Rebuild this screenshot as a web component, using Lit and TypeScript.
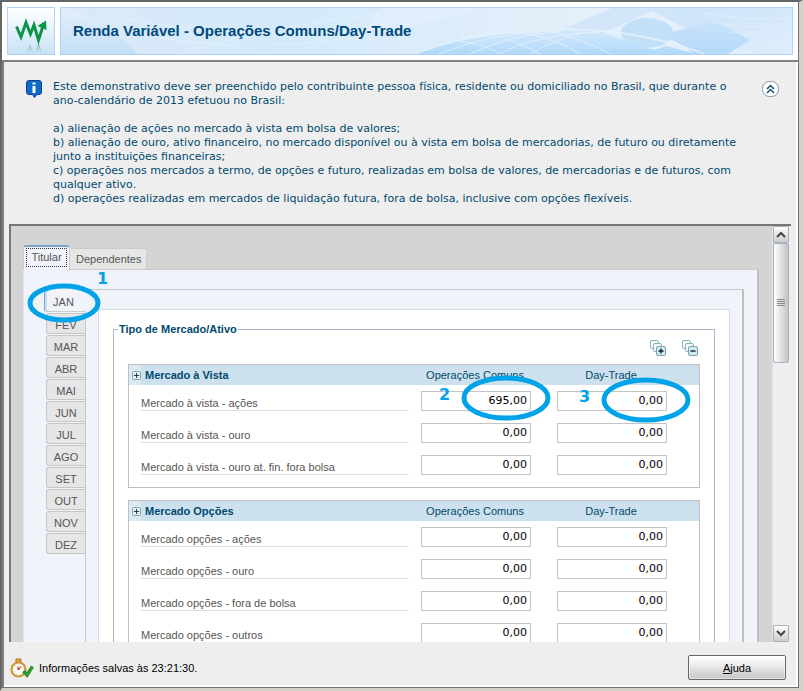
import { LitElement, html, css, svg, nothing } from "lit";
import { customElement, property } from "lit/decorators.js";
import { classMap } from "lit/directives/class-map.js";

interface Row {
  label: string;
  comuns: string;
  day: string;
  marked?: boolean;
}

const MONTHS = ["JAN", "FEV", "MAR", "ABR", "MAI", "JUN", "JUL", "AGO", "SET", "OUT", "NOV", "DEZ"];

const VISTA: Row[] = [
  { label: "Mercado à vista - ações", comuns: "695,00", day: "0,00", marked: true },
  { label: "Mercado à vista - ouro", comuns: "0,00", day: "0,00" },
  { label: "Mercado à vista - ouro at. fin. fora bolsa", comuns: "0,00", day: "0,00" },
];

const OPCOES: Row[] = [
  { label: "Mercado opções - ações", comuns: "0,00", day: "0,00" },
  { label: "Mercado opções - ouro", comuns: "0,00", day: "0,00" },
  { label: "Mercado opções - fora de bolsa", comuns: "0,00", day: "0,00" },
  { label: "Mercado opções - outros", comuns: "0,00", day: "0,00" },
];

/* Hand-drawn ring with a step number, laid over the field it points at. */
@customElement("step-mark")
export class StepMark extends LitElement {
  @property() step = "";
  @property() size: "small" | "large" = "large";

  static styles = css`
    :host {
      display: block;
      position: absolute;
      pointer-events: none;
      color: #00a2e8;
    }
    .ring {
      display: block;
    }
    .num {
      position: absolute;
      font: bold 16px/16px "DejaVu Sans", sans-serif;
    }
    .num.large {
      left: -22px;
      top: 12px;
    }
    .num.small {
      left: 70px;
      top: -12px;
    }
  `;

  render() {
    const w = this.size === "small" ? 74 : 90;
    const h = this.size === "small" ? 40 : 46;
    return html`
      <svg class="ring" width=${w} height=${h} viewBox="0 0 ${w} ${h}">
        <ellipse cx=${w / 2} cy=${h / 2} rx=${w / 2 - 3} ry=${h / 2 - 3}
          fill="none" stroke="currentColor" stroke-width="5" />
      </svg>
      <span class="num ${this.size}">${this.step}</span>
    `;
  }
}

@customElement("asset-table")
export class AssetTable extends LitElement {
  @property() heading = "";
  @property({ attribute: false }) rows: Row[] = [];

  static styles = css`
    :host {
      display: block;
      border: 1px solid #bfbfbf;
      padding-bottom: 6px;
    }
    .grid {
      width: 100%;
      table-layout: fixed;
      border-collapse: collapse;
    }
    .amount {
      width: 136px;
    }
    .last {
      width: 142px;
    }
    th,
    td {
      padding: 0;
    }
    .head th {
      height: 20px;
      background: #cde0ee;
      color: #004a6e;
      font-weight: normal;
    }
    .head .title {
      font-weight: bold;
      text-align: left;
    }
    .bar {
      display: flex;
      align-items: center;
      gap: 4px;
    }
    .toggle {
      display: flex;
      align-items: center;
      justify-content: center;
      width: 12px;
      height: 20px;
      padding: 0 0 0 3px;
      box-sizing: border-box;
      border: 0;
      background: #d9e9f6;
    }
    .colname {
      display: block;
      width: 108px;
    }
    .cell {
      height: 32px;
      vertical-align: top;
    }
    .name {
      display: block;
      margin: 9px 12px 0;
      height: 16px;
      line-height: 18px;
      border-bottom: 1px solid #dedede;
      color: #555;
      text-align: left;
      font-weight: normal;
    }
    .holder {
      position: relative;
      width: 110px;
      padding-top: 6px;
    }
    .value {
      display: block;
      box-sizing: border-box;
      width: 110px;
      height: 20px;
      margin: 0;
      padding: 0 3px 1px;
      border: 1px solid #c4c4c4;
      background: #fff;
      color: #000;
      text-align: right;
      font: 11px "DejaVu Sans", Verdana, sans-serif;
      outline: none;
    }
    .m2 {
      left: 40px;
      top: -10px;
    }
    .m3 {
      left: 44px;
      top: -8px;
    }
  `;

  render() {
    return html`
      <table class="grid">
        <colgroup>
          <col />
          <col class="amount" />
          <col class="last" />
        </colgroup>
        <thead>
          <tr class="head">
            <th class="title" scope="col">
              <div class="bar">
                <button class="toggle" aria-label="Expandir ${this.heading}">
                  <svg width="9" height="9" viewBox="0 0 9 9">
                    <rect x="0.5" y="0.5" width="8" height="8" rx="1" fill="#e4eff5" stroke="#8ba3ad" />
                    <path d="M2 4.5H7M4.5 2V7" stroke="#25404c" />
                  </svg>
                </button>
                ${this.heading}
              </div>
            </th>
            <th scope="col"><span class="colname">Operações Comuns</span></th>
            <th scope="col"><span class="colname">Day-Trade</span></th>
          </tr>
        </thead>
        <tbody>
          ${this.rows.map(
            (r) => html`
              <tr>
                <th class="cell" scope="row"><span class="name">${r.label}</span></th>
                <td class="cell">
                  <div class="holder">
                    <input class="value" aria-label="${r.label}, Operações Comuns" .value=${r.comuns} />
                    ${r.marked ? html`<step-mark class="m2" step="2"></step-mark>` : nothing}
                  </div>
                </td>
                <td class="cell">
                  <div class="holder">
                    <input class="value" aria-label="${r.label}, Day-Trade" .value=${r.day} />
                    ${r.marked ? html`<step-mark class="m3" step="3"></step-mark>` : nothing}
                  </div>
                </td>
              </tr>
            `
          )}
        </tbody>
      </table>
    `;
  }
}

const stackIcon = (minus: boolean) => svg`
  <g fill="#f4fafb" stroke="#8fb0b5">
    <rect x="0.5" y="0.5" width="8" height="8" rx="1.5" />
    <rect x="3.5" y="3.5" width="8" height="8" rx="1.5" />
  </g>
  <rect x="6.5" y="6.5" width="9" height="9" rx="1.5" fill="#cfe9ee" stroke="#7fa3aa" />
  <path d=${minus ? "M8.500 11H13.500" : "M8.500 11H13.500M11 8.500V13.500"} stroke="#123" stroke-width="1.4" />
`;

@customElement("app-root")
export class AppRoot extends LitElement {
  static styles = css`
    :host {
      display: block;
      font: 11px/14px "Liberation Sans", Arial, sans-serif;
      color: #000;
    }
    .window {
      display: flex;
      flex-direction: column;
      box-sizing: border-box;
      height: 100vh;
      background: #eee;
      border: solid;
      border-width: 2px 4px 3px 2px;
      border-color: #666 #d4d0c8 #d4d0c8 #666;
      overflow: hidden;
    }
    .header {
      display: flex;
      gap: 5px;
      padding: 5px;
      background: #fff;
      border-right: 1px solid #707078;
    }
    .logo {
      box-sizing: border-box;
      width: 48px;
      height: 48px;
      border: 1px solid #b0d2f3;
      background: linear-gradient(#fff, #c9e2f8);
      flex: none;
    }
    .banner {
      position: relative;
      flex: 1;
      box-sizing: border-box;
      height: 48px;
      border: 1px solid #b0d2f3;
      background: #d5e9fa;
      overflow: hidden;
      display: flex;
      align-items: center;
    }
    .art {
      position: absolute;
      right: 0;
      top: 0;
      width: 100%;
      height: 46px;
    }
    .title {
      position: relative;
      margin: 0 0 0 12px;
      font-size: 15px;
      line-height: 20px;
      color: #004a7c;
    }
    .body {
      flex: 1;
      min-height: 0;
      display: flex;
      flex-direction: column;
      border: solid;
      border-width: 2px 1px 1px 2px;
      border-color: #808084 #707078 #707078 #808080;
      box-shadow: inset -2px -2px #fff;
      padding: 0 7px 0 5px;
    }
    .intro {
      display: flex;
      align-items: flex-start;
      padding: 18px 12px 18px 17px;
      color: #004a6e;
      font-family: "DejaVu Sans", Verdana, sans-serif;
    }
    .info {
      flex: none;
    }
    .copy {
      flex: 1;
      margin: 0 0 0 11px;
    }
    .copy p {
      margin: 0 0 14px;
    }
    .copy p:last-child {
      margin: 0;
    }
    .collapse {
      flex: none;
      margin-top: 1px;
      padding: 0;
      border: 0;
      background: none;
      height: 17px;
    }
    .pane {
      flex: 1;
      min-height: 0;
      display: flex;
      overflow: hidden;
      background: #d4d4d4;
      border: solid #787878;
      border-width: 2px 0 0 2px;
    }
    .canvas {
      flex: 1;
      padding: 19px 14px 0 12px;
    }
    .tabs {
      display: flex;
      align-items: flex-end;
    }
    .tab {
      font: inherit;
      color: #555;
      box-sizing: border-box;
      height: 21px;
      padding: 0 5px;
      border: 1px solid #ccc;
      border-bottom: 0;
      border-left-color: #e6e6e6;
      background: #e6e6e6;
    }
    .tab.on {
      position: relative;
      height: 25px;
      width: 47px;
      margin-bottom: -1px;
      padding: 0 0 4px;
      border: 1px solid #c8ccd0;
      border-top: 2px solid #7ba6c8;
      border-bottom: 0;
      border-radius: 3px 3px 0 0;
      background: #f0f4fa;
      outline: 1px dotted #333;
      outline-offset: -4px;
    }
    .outer {
      border: 1px solid #ccc;
      border-right: 2px solid #c0c0c0;
      border-left-color: #e0e6ee;
      background: #f0f4fa;
      padding: 19px 13px 0 20px;
      display: flex;
      align-items: flex-start;
      height: 700px;
    }
    .months {
      flex: none;
      width: 41px;
      display: flex;
      flex-direction: column;
      align-items: flex-end;
      gap: 1px;
      padding-top: 2px;
    }
    .month {
      font: inherit;
      color: #555;
      box-sizing: border-box;
      width: 39px;
      height: 21px;
      padding: 2px 0 0;
      border: 1px solid #c6c6c6;
      border-right: 0;
      border-radius: 3px 0 0 3px;
      background: #e6e6e6;
    }
    .month.on {
      width: 42px;
      padding-right: 4px;
      margin-right: -1px;
      border-color: #ccc #ccc #ccc #7ba6c8;
      border-top: 0;
      box-shadow: inset 2px 0 #c3ddf2;
      background: #f0f4fa;
    }
    .jan {
      position: relative;
      z-index: 1;
    }
    .jan step-mark {
      left: -17px;
      top: -8px;
    }
    .inner {
      flex: 1;
      border: 1px solid #c4c8cc;
      border-right: 2px solid #c0c0c0;
      padding: 19px 12px 0;
      height: 680px;
    }
    .sheet {
      border: 1px solid #d0dae4;
      background: #fff;
      padding: 12px 14px 0;
      height: 660px;
    }
    .group {
      margin: 0;
      min-width: 0;
      padding: 4px 14px 12px;
      border: 1px solid #a9b6c4;
    }
    .group legend {
      margin-left: -10px;
      padding: 0 1px;
      font-weight: bold;
      color: #004a6e;
    }
    .tools {
      display: flex;
      justify-content: flex-end;
      gap: 16px;
      padding-right: 2px;
      height: 24px;
    }
    .tool {
      width: 16px;
      height: 16px;
      padding: 0;
      border: 0;
      background: none;
    }
    .tables {
      display: grid;
      gap: 12px;
    }
    .scroll {
      flex: none;
      width: 16px;
      margin-right: 2px;
      display: flex;
      flex-direction: column;
      background: #eee;
      box-shadow: 2px 0 #eee, -1px 0 #e4e4e4;
    }
    .arrow {
      flex: none;
      box-sizing: border-box;
      width: 16px;
      height: 17px;
      padding: 0;
      border: 1px solid #a8b0c0;
      border-radius: 1px;
      background: linear-gradient(#fff, #ccc);
      display: flex;
      align-items: center;
      justify-content: center;
    }
    .track {
      flex: 1;
    }
    .thumb {
      box-sizing: border-box;
      height: 120px;
      border: 1px solid #a8b0c8;
      border-radius: 2px;
      background: linear-gradient(90deg, #fff, #c4c4c4);
      display: flex;
      align-items: center;
      justify-content: center;
    }
    .footer {
      display: flex;
      align-items: center;
      box-sizing: border-box;
      height: 45px;
      padding: 6px 5px 0 1px;
    }
    .status {
      flex: 1;
      margin-left: 4px;
    }
    .help {
      font: inherit;
      width: 98px;
      height: 25px;
      padding: 0;
      border: 1px solid #666;
      border-radius: 2px;
      box-shadow: inset 0 0 0 1px #fff8;
      background: linear-gradient(#fff, #f2f2f2 30%, #c6c6c6);
    }
  `;

  render() {
    return html`
      <div class="window">
        <header class="header">
          <div class="logo">
            <svg width="46" height="46" viewBox="0 0 46 46">
              <defs>
                <linearGradient id="fade" x1="0" y1="0" x2="0" y2="1">
                  <stop offset="0" stop-color="#2a9a5a" stop-opacity="0.4" />
                  <stop offset="1" stop-color="#2a9a5a" stop-opacity="0" />
                </linearGradient>
              </defs>
              <path d="M19 46L22 39 25 45M28 45L30.500 37 33 45" fill="none" stroke="url(#fade)" stroke-width="2" />
              <path d="M8.500 18.500L13 29 18 14.500 22.500 26 26 17 30.500 32 35 18" fill="none" stroke="#0a9447" stroke-width="2.900" />
              <path d="M29.500 18L38 12.500 38.500 22Z" fill="#0a9447" />
            </svg>
          </div>
          <div class="banner">
            <svg class="art" viewBox="0 0 732 46" preserveAspectRatio="xMaxYMid slice">
              <defs>
                <linearGradient id="lft" x1="0" y1="0" x2="0" y2="1">
                  <stop offset="0" stop-color="#e4eefa" />
                  <stop offset="1" stop-color="#c3dff7" />
                </linearGradient>
                <linearGradient id="base" x1="0" y1="0" x2="1" y2="0">
                  <stop offset="0" stop-color="#dbe9f8" />
                  <stop offset="0.3" stop-color="#d3eafa" />
                  <stop offset="0.5" stop-color="#dcecfa" />
                  <stop offset="0.7" stop-color="#e5effa" />
                </linearGradient>
                <linearGradient id="dia" x1="0" y1="0" x2="0" y2="1">
                  <stop offset="0" stop-color="#cbe3f9" />
                  <stop offset="1" stop-color="#b4d9fa" />
                </linearGradient>
                <linearGradient id="wave" x1="0" y1="0" x2="0" y2="1">
                  <stop offset="0" stop-color="#d3e8fb" />
                  <stop offset="1" stop-color="#b0d9fb" />
                </linearGradient>
                <linearGradient id="right" x1="0" y1="0" x2="1" y2="1">
                  <stop offset="0" stop-color="#cbe3f9" />
                  <stop offset="1" stop-color="#deedfb" />
                </linearGradient>
              </defs>
              <rect width="732" height="46" fill="url(#base)" />
              <path d="M0 0H10Q50 18 78 46H0Z" fill="url(#lft)" />
              <path d="M288 46Q306 24 320 0H420Q360 20 302 24Z" fill="#e2effb" opacity="0.7" />
              <path d="M494 25L552 0H620L606 26 560 30Z" fill="#d3e6f9" />
              <path d="M612 0L606 24 634 30 696 46H732V0Z" fill="url(#right)" />
              <path d="M356 46Q420 22 500 23 570 26 636 46Z" fill="url(#wave)" />
              <path d="M543 25L592 3 640 27 594 42Z" fill="#e3effb" />
              <ellipse cx="587" cy="25" rx="26" ry="15" fill="#c3e0f9" />
              <path d="M606 26L654 12 690 32 668 46H634Q620 34 606 30Z" fill="url(#dia)" />
              <path d="M400 30Q500 16 560 25 610 32 644 46" fill="none" stroke="#e4f1fd" stroke-width="2" opacity="0.8" />
              <g fill="none" stroke="#e4f2fe" opacity="0.8">
                <path d="M356 46Q410 22 500 23M378 46Q430 26 480 24M410 46Q450 26 500 24M440 46Q470 28 540 24M470 46Q490 34 520 25M430 26Q460 34 480 46M460 24Q500 32 520 46M490 23Q530 34 550 46M400 33Q430 38 440 46" />
              </g>
              <g fill="none" stroke="#eef6fd" opacity="0.5">
                <path d="M80 26Q180 46 290 30M60 10Q180 34 300 18M120 46Q200 20 320 6M640 4Q690 14 732 10M650 14Q700 22 732 18M670 24Q704 30 732 26M690 34Q712 38 732 34" />
              </g>
            </svg>
            <h1 class="title">Renda Variável - Operações Comuns/Day-Trade</h1>
          </div>
        </header>
        <main class="body">
          <section class="intro">
            <svg class="info" width="16" height="18" viewBox="0 0 16 18">
              <path d="M3 0.500H13Q15.500 0.500 15.500 3V12Q15.500 14.500 13 14.500H11L8.500 17.500 6.500 14.500H3Q0.500 14.500 0.500 12V3Q0.500 0.500 3 0.500Z" fill="#0a6cc8" stroke="#123f9c" />
              <path d="M6.500 2.500H9.500V4.500H6.500ZM6.500 6H9.500V13H6.500Z" fill="#fff" />
            </svg>
            <div class="copy">
              <p>
                Este demonstrativo deve ser preenchido pelo contribuinte pessoa física, residente ou domiciliado no Brasil, que durante o<br />
                ano-calendário de 2013 efetuou no Brasil:
              </p>
              <p>
                a) alienação de ações no mercado à vista em bolsa de valores;<br />
                b) alienação de ouro, ativo financeiro, no mercado disponível ou à vista em bolsa de mercadorias, de futuro ou diretamente<br />
                junto a instituições financeiras;<br />
                c) operações nos mercados a termo, de opções e futuro, realizadas em bolsa de valores, de mercadorias e de futuros, com<br />
                qualquer ativo.<br />
                d) operações realizadas em mercados de liquidação futura, fora de bolsa, inclusive com opções flexíveis.
              </p>
            </div>
            <button class="collapse" aria-label="Recolher">
              <svg width="17" height="17" viewBox="0 0 17 17">
                <rect x="0.500" y="0.500" width="16" height="15" rx="7" fill="#fff" stroke="#8093ab" />
                <path d="M5 8L8.500 4.500 12 8M5 12L8.500 8.500 12 12" fill="none" stroke="#16506e" stroke-width="1.500" />
              </svg>
            </button>
          </section>
          <section class="pane">
            <div class="canvas">
              <nav class="tabs">
                <button class="tab on">Titular</button>
                <button class="tab">Dependentes</button>
              </nav>
              <div class="outer">
                <nav class="months">
                  ${MONTHS.map((m, i) =>
                    i === 0
                      ? html`<div class="jan">
                          <button class=${classMap({ month: true, on: true })}>${m}</button>
                          <step-mark size="small" step="1"></step-mark>
                        </div>`
                      : html`<button class="month">${m}</button>`
                  )}
                </nav>
                <div class="inner">
                  <div class="sheet">
                    <fieldset class="group">
                      <legend>Tipo de Mercado/Ativo</legend>
                      <div class="tools">
                        <button class="tool" aria-label="Expandir todos">
                          <svg width="16" height="16" viewBox="0 0 16 16">${stackIcon(false)}</svg>
                        </button>
                        <button class="tool" aria-label="Recolher todos">
                          <svg width="16" height="16" viewBox="0 0 16 16">${stackIcon(true)}</svg>
                        </button>
                      </div>
                      <div class="tables">
                        <asset-table heading="Mercado à Vista" .rows=${VISTA}></asset-table>
                        <asset-table heading="Mercado Opções" .rows=${OPCOES}></asset-table>
                      </div>
                    </fieldset>
                  </div>
                </div>
              </div>
            </div>
            <div class="scroll">
              <button class="arrow" aria-label="Rolar para cima">
                <svg width="10" height="7" viewBox="0 0 10 7"><path d="M1 6L5 2 9 6" fill="none" stroke="#444" stroke-width="2" /></svg>
              </button>
              <div class="track">
                <div class="thumb">
                  <svg width="8" height="8" viewBox="0 0 8 8"><path d="M0 0.500H8M0 2.500H8M0 4.500H8M0 6.500H8" stroke="#888" /></svg>
                </div>
              </div>
              <button class="arrow" aria-label="Rolar para baixo">
                <svg width="10" height="7" viewBox="0 0 10 7"><path d="M1 1L5 5 9 1" fill="none" stroke="#444" stroke-width="2" /></svg>
              </button>
            </div>
          </section>
          <footer class="footer">
            <svg width="25" height="20" viewBox="0 0 25 20">
              <path d="M6 1H11V4H6Z" fill="#e8b44a" stroke="#a8701c" />
              <circle cx="8.500" cy="11.500" r="7" fill="#fff" stroke="#d0963a" stroke-width="2.200" />
              <circle cx="8.500" cy="11.500" r="4.800" fill="none" stroke="#c9b089" stroke-width="1" stroke-dasharray="1 2" />
              <path d="M8.500 12L11 8.500M8 8.500V12" stroke="#c03818" stroke-width="1.200" fill="none" />
              <path d="M13.500 13L17 17 22.500 8.500" fill="none" stroke="#2f9a2a" stroke-width="3.600" />
            </svg>
            <span class="status">Informações salvas às 23:21:30.</span>
            <button class="help"><u>A</u>juda</button>
          </footer>
        </main>
      </div>
    `;
  }
}
